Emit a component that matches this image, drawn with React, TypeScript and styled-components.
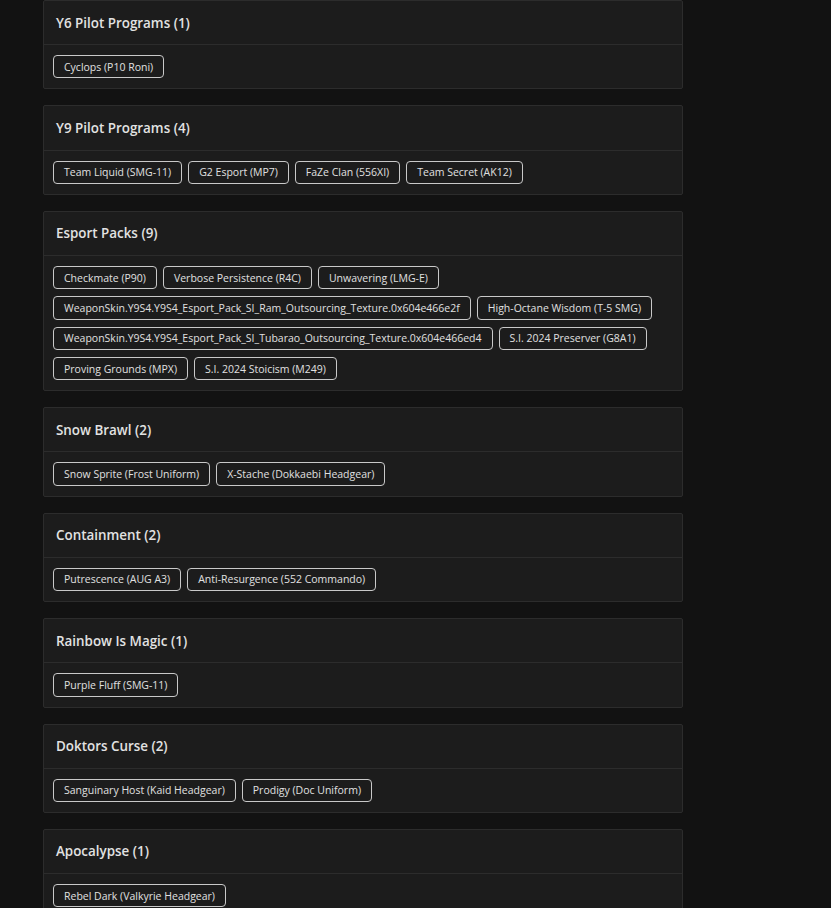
import React from "react";
import styled, { createGlobalStyle } from "styled-components";

const GlobalStyle = createGlobalStyle`
  html, body {
    margin: 0;
    padding: 0;
    background: #121212;
  }
  body {
    font-family: "Open Sans", "Noto Sans", Arial, sans-serif;
    color: #e6e6e6;
  }
`;

const Page = styled.div`
  display: flex;
  flex-direction: column;
  gap: 16px;
  width: 640px;
  padding: 0 0 40px 43px;
`;

const Card = styled.section`
  background: #1c1c1c;
  border: 1px solid #2c2c2c;
  border-radius: 2px;
`;

const CardHeader = styled.h3`
  margin: 0;
  height: 43.1px;
  display: flex;
  align-items: center;
  padding: 0 12px;
  border-bottom: 1px solid #2c2c2c;
  font-size: 13.4px;
  font-weight: 600;
  color: #e2e2e2;
`;

const CardBody = styled.div`
  display: flex;
  flex-wrap: wrap;
  column-gap: 6px;
  row-gap: 7px;
  padding: 10px 9px;
`;

const Tag = styled.span`
  display: inline-flex;
  align-items: center;
  box-sizing: border-box;
  height: 23.33px;
  padding: 0 10px;
  border: 1px solid #c9c9c9;
  border-radius: 4px;
  font-size: 10.5px;
  color: #e0e0e0;
  white-space: nowrap;
`;

type Collection = { name: string; items: string[] };

const collections: Collection[] = [
  { name: "Y6 Pilot Programs", items: ["Cyclops (P10 Roni)"] },
  {
    name: "Y9 Pilot Programs",
    items: ["Team Liquid (SMG-11)", "G2 Esport (MP7)", "FaZe Clan (556XI)", "Team Secret (AK12)"],
  },
  {
    name: "Esport Packs",
    items: [
      "Checkmate (P90)",
      "Verbose Persistence (R4C)",
      "Unwavering (LMG-E)",
      "WeaponSkin.Y9S4.Y9S4_Esport_Pack_SI_Ram_Outsourcing_Texture.0x604e466e2f",
      "High-Octane Wisdom (T-5 SMG)",
      "WeaponSkin.Y9S4.Y9S4_Esport_Pack_SI_Tubarao_Outsourcing_Texture.0x604e466ed4",
      "S.I. 2024 Preserver (G8A1)",
      "Proving Grounds (MPX)",
      "S.I. 2024 Stoicism (M249)",
    ],
  },
  { name: "Snow Brawl", items: ["Snow Sprite (Frost Uniform)", "X-Stache (Dokkaebi Headgear)"] },
  { name: "Containment", items: ["Putrescence (AUG A3)", "Anti-Resurgence (552 Commando)"] },
  { name: "Rainbow Is Magic", items: ["Purple Fluff (SMG-11)"] },
  { name: "Doktors Curse", items: ["Sanguinary Host (Kaid Headgear)", "Prodigy (Doc Uniform)"] },
  { name: "Apocalypse", items: ["Rebel Dark (Valkyrie Headgear)"] },
];

export default function App() {
  return (
    <>
      <GlobalStyle />
      <Page>
        {collections.map((c) => (
          <Card key={c.name}>
            <CardHeader>
              {c.name} ({c.items.length})
            </CardHeader>
            <CardBody>
              {c.items.map((item) => (
                <Tag key={item}>{item}</Tag>
              ))}
            </CardBody>
          </Card>
        ))}
      </Page>
    </>
  );
}
